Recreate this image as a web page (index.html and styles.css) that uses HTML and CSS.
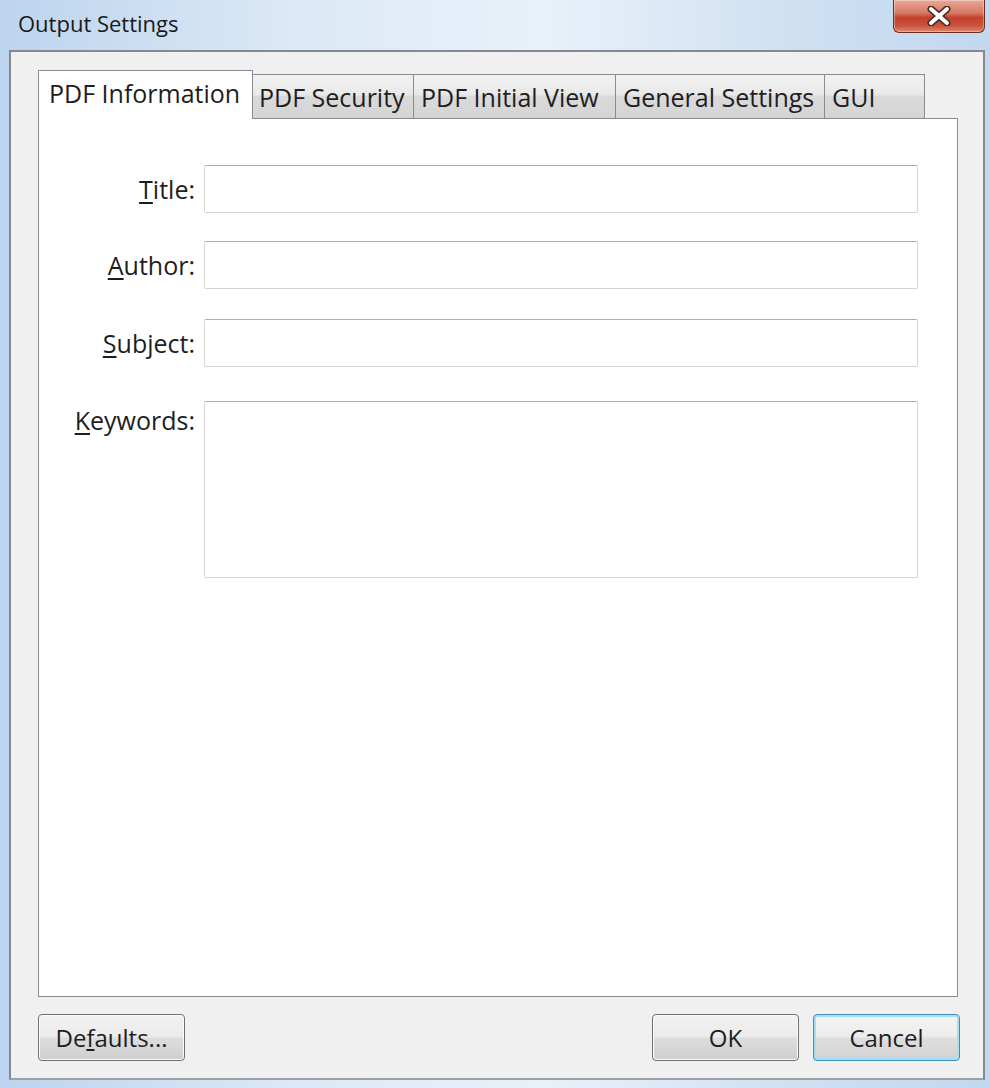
FILE: index.html
```html
<!DOCTYPE html>
<html lang="en">
<head>
    <meta charset="UTF-8">
    <title>Output Settings</title>
    <link rel="stylesheet" href="styles.css">
</head>
<body>
    <div class="window">
        <div class="titlebar">
            <div class="caption">Output Settings</div>
            <button class="close" aria-label="Close">
                <svg width="26" height="20" viewBox="0 0 26 20">
                    <path d="M5 3 L21 17 M21 3 L5 17" stroke="#4a2a24" stroke-width="7" stroke-linecap="round"/>
                    <path d="M5 3 L21 17 M21 3 L5 17" stroke="#fff" stroke-width="4" stroke-linecap="round"/>
                </svg>
            </button>
        </div>
        <div class="client">
            <div class="tabs">
                <div class="tab selected">PDF Information</div>
                <div class="tab t-security">PDF Security</div>
                <div class="tab t-view">PDF Initial View</div>
                <div class="tab t-general">General Settings</div>
                <div class="tab last">GUI</div>
            </div>
            <div class="panel">
                <div class="row">
                    <label class="lbl"><u>T</u>itle:</label>
                    <input class="field" type="text">
                </div>
                <div class="row">
                    <label class="lbl"><u>A</u>uthor:</label>
                    <input class="field" type="text">
                </div>
                <div class="row">
                    <label class="lbl"><u>S</u>ubject:</label>
                    <input class="field" type="text">
                </div>
                <div class="row tall">
                    <label class="lbl"><u>K</u>eywords:</label>
                    <textarea class="field area"></textarea>
                </div>
            </div>
            <div class="buttons">
                <button class="btn">De<u>f</u>aults...</button>
                <div class="spacer"></div>
                <button class="btn">OK</button>
                <button class="btn focus">Cancel</button>
            </div>
        </div>
    </div>
</body>
</html>
```

FILE: styles.css
```css
body {
    margin: 0;
    background: #c8dcf0;
    font-family: "Open Sans", "Noto Sans", sans-serif;
    color: #1e1e1e;
}
.window {
    width: 990px;
    height: 1088px;
    background: linear-gradient(90deg, #bcd4ee 0%, #dce9f6 30%, #e9f1f9 55%, #cfe0f2 80%, #c2d8ef 100%);
}
.titlebar {
    height: 50px;
    display: flex;
    justify-content: space-between;
    align-items: flex-start;
}
.caption {
    font-size: 22px;
    padding: 8px 0 0 18px;
    color: #1a1a1a;
}
.close {
    width: 92px;
    height: 33px;
    margin-right: 5px;
    border: 1px solid #6e2c22;
    border-top: none;
    border-radius: 0 0 6px 6px;
    background: linear-gradient(180deg, #e9a795 0%, #d87a66 40%, #c2412b 55%, #c9533d 80%, #dd8a6f 100%);
    display: flex;
    align-items: center;
    justify-content: center;
    padding: 0;
    box-shadow: inset 0 0 0 1px rgba(255,255,255,0.35);
}
.client {
    margin: 0 5px 0 9px;
    height: 1030px;
    box-sizing: border-box;
    border: 2px solid #85898f;
    border-bottom-color: #9aa0a6;
    background: #f0f0f0;
    padding: 18px 25px 0 27px;
    display: flex;
    flex-direction: column;
}
.tabs {
    display: flex;
    align-items: flex-end;
    height: 48px;
    position: relative;
    z-index: 1;
}
.tab {
    height: 44px;
    box-sizing: border-box;
    padding: 0 0 0 7px;
    font-size: 25px;
    white-space: nowrap;
    overflow: hidden;
    display: flex;
    align-items: center;
    border: 1px solid #898c95;
    border-bottom: none;
    border-right: none;
    background: linear-gradient(180deg, #f1f1f1 0%, #e9e9e9 45%, #dadada 50%, #d4d4d4 100%);
}
.t-security { width: 161px; }
.t-view { width: 202px; }
.t-general { width: 209px; }
.tab.last {
    border-right: 1px solid #898c95;
    width: 101px;
}
.tab.selected {
    width: 215px;
    height: 49px;
    margin-bottom: -1px;
    background: #fff;
    padding: 0 0 4px 10px;
    border-right: 1px solid #898c95;
    margin-right: -1px;
    position: relative;
}
.tab.selected + .tab {
    border-left: none;
}
.panel {
    width: 920px;
    height: 879px;
    box-sizing: border-box;
    border: 1px solid #898c95;
    background: #fff;
    padding: 46px 0 0 0;
}
.row {
    display: flex;
    align-items: center;
    gap: 9px;
    margin-bottom: 28px;
}
.row:nth-child(2) {
    margin-bottom: 30px;
}
.row:nth-child(3) {
    margin-bottom: 34px;
}
.row.tall {
    align-items: flex-start;
}
.row.tall .lbl {
    padding-top: 2px;
}
.lbl {
    width: 156px;
    font-size: 25px;
    text-align: right;
}
.lbl u {
    text-underline-offset: 3px;
}
.field {
    box-sizing: border-box;
    width: 714px;
    height: 48px;
    border: 1px solid #d5d5d5;
    border-top-color: #abadb3;
    border-radius: 2px;
    background: #fff;
    margin: 0;
    font: inherit;
}
.field.area {
    height: 177px;
    resize: none;
}
.buttons {
    display: flex;
    gap: 14px;
    margin-top: 17px;
    width: 922px;
}
.spacer {
    flex: 1;
}
.btn {
    width: 147px;
    height: 47px;
    font-family: "Open Sans", "Noto Sans", sans-serif;
    font-size: 24px;
    color: #1e1e1e;
    border: 1px solid #707070;
    border-radius: 4px;
    background: linear-gradient(180deg, #f2f2f2 0%, #ebebeb 48%, #dddddd 52%, #cfcfcf 100%);
    box-shadow: inset 0 0 0 1px #fbfbfb;
    padding: 0;
}
.btn.focus {
    border-color: #3c8fc0;
    box-shadow: inset 0 0 0 2px #a9dcf5;
    background: linear-gradient(180deg, #f4f4f4 0%, #ececec 48%, #dedede 52%, #d2d2d2 100%);
}
```
